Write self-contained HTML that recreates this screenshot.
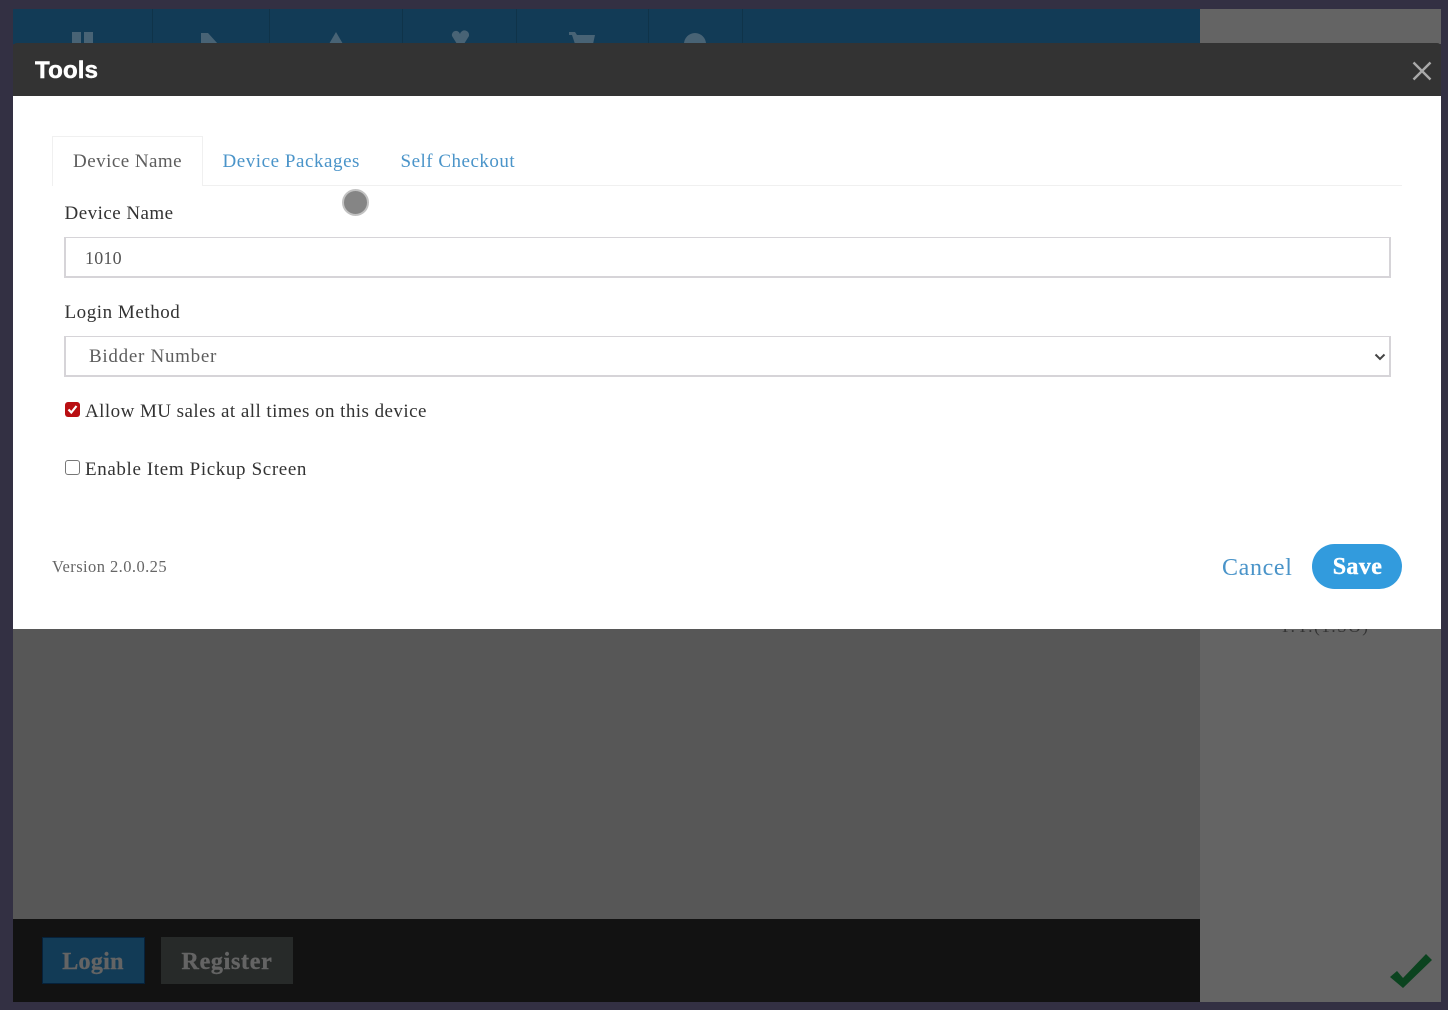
<!DOCTYPE html>
<html>
<head>
<meta charset="utf-8">
<title>Tools</title>
<style>
html,body{margin:0;padding:0}
body{width:1448px;height:1010px;overflow:hidden;position:relative;background:#333043;font-family:"Liberation Serif",serif}
div,span{position:absolute;white-space:nowrap}
.t{line-height:24px;font-size:19px;letter-spacing:.3px}
.b{font-weight:bold}
</style>
</head>
<body>
<div style="left:13px;top:9px;width:1187px;height:35px;background:#123b56"></div>
<div style="left:1200px;top:9px;width:241px;height:35px;background:#646464"></div>
<div style="left:13px;top:628px;width:1187px;height:291px;background:#575757"></div>
<div style="left:1200px;top:628px;width:241px;height:374px;background:#646464"></div>
<div style="left:13px;top:919px;width:1187px;height:83px;background:#121212"></div>

<!-- tab separators and icons behind the modal -->
<div style="left:152px;top:9px;width:1px;height:35px;background:#0f3349"></div>
<div style="left:269px;top:9px;width:1px;height:35px;background:#0f3349"></div>
<div style="left:402px;top:9px;width:1px;height:35px;background:#0f3349"></div>
<div style="left:516px;top:9px;width:1px;height:35px;background:#0f3349"></div>
<div style="left:648px;top:9px;width:1px;height:35px;background:#0f3349"></div>
<div style="left:742px;top:9px;width:1px;height:35px;background:#0f3349"></div>
<svg style="position:absolute;left:0;top:0" width="760" height="44">
<g fill="#486375">
<rect x="72" y="32" width="9" height="12"/><rect x="84" y="32" width="9" height="12"/>
<path d="M201 33h7l10 11h-17z"/>
<path d="M329 44l7-12 7 12z"/>
<path d="M452 36a4 4 0 0 1 8-2 4 4 0 0 1 9 2l-5 8h-7z"/>
<path d="M569 32h6l2 3h18l-2 9h-18l-3-9h-3z"/>
<path d="M684 44a11 11 0 0 1 22 0z"/>
</g>
</svg>

<div style="left:1279px;top:618px;font-size:17px;line-height:18px;color:#333;letter-spacing:1.6px">Y.Y.(1.SO)</div>

<!-- bottom buttons -->
<div style="left:42px;top:937px;width:103px;height:47px;background:#123b56;border:1px solid #06213a;box-sizing:border-box"></div>
<div class="b" style="left:42px;top:938px;width:102px;height:47px;line-height:48px;text-align:center;font-size:24px;color:#646464;letter-spacing:.3px;-webkit-text-stroke:.4px #646464">Login</div>
<div style="left:161px;top:937px;width:132px;height:47px;background:#272a29"></div>
<div class="b" style="left:161px;top:938px;width:132px;height:47px;line-height:48px;text-align:center;font-size:24px;color:#646464;letter-spacing:.7px;-webkit-text-stroke:.4px #646464">Register</div>

<!-- check -->
<svg style="position:absolute;left:1385px;top:950px" width="50" height="45">
<path d="M5 27L12 21 18 28 41 4 47 10 18 38Z" fill="#0b431f"/>
</svg>

<!-- modal -->
<div style="left:13px;top:96px;width:1428px;height:533px;background:#fff"></div>
<div style="left:13px;top:43px;width:1428px;height:53px;background:#333;border-radius:4px 4px 0 0"></div>
<div style="left:35px;top:56px;font-family:'Liberation Sans',sans-serif;font-weight:bold;font-size:24px;line-height:30px;color:#fff;letter-spacing:.2px;-webkit-text-stroke:.5px #fff">Tools</div>
<svg style="position:absolute;left:1410px;top:59px" width="24" height="24">
<path d="M3.500 3.500L20.500 20.500M20.500 3.500L3.500 20.500" stroke="#a9a9a9" stroke-width="2.400" fill="none"/>
</svg>

<!-- tabs -->
<div style="left:203px;top:185px;width:1199px;height:1px;background:#f0f0f0"></div>
<div style="left:52px;top:136px;width:151px;height:50px;box-sizing:border-box;border:1px solid #f0f0f0;border-bottom:0;background:#fff"></div>
<div class="t" style="left:73px;top:150px;color:#5d5d5d;letter-spacing:.47px">Device Name</div>
<div class="t" style="left:222.500px;top:150px;color:#4a94c9;letter-spacing:.55px">Device Packages</div>
<div class="t" style="left:400.500px;top:150px;color:#4a94c9;letter-spacing:.5px">Self Checkout</div>

<!-- cursor marker -->
<div style="left:342px;top:189px;width:27px;height:27px;box-sizing:border-box;border-radius:50%;background:#858585;border:2px solid #c2c2c2"></div>

<!-- Device name -->
<div class="t" style="left:64.500px;top:202px;color:#333;letter-spacing:.47px">Device Name</div>
<div style="left:64px;top:237px;width:1327px;height:41px;box-sizing:border-box;border:1px solid #d6d4d8;border-left-width:2px;border-bottom-width:2px;border-right-width:2px;background:#fff"></div>
<div class="t" style="left:85px;top:246px;color:#555;font-size:18px;letter-spacing:.2px">1010</div>

<!-- Login method -->
<div class="t" style="left:64.500px;top:301px;color:#333;letter-spacing:.55px">Login Method</div>
<div style="left:64px;top:336px;width:1327px;height:41px;box-sizing:border-box;border:1px solid #d6d4d8;border-left-width:2px;border-bottom-width:2px;border-right-width:2px;background:#fff"></div>
<div class="t" style="left:89px;top:345px;color:#5d5d5d;letter-spacing:.72px">Bidder Number</div>
<svg style="position:absolute;left:1373px;top:351px" width="14" height="12">
<path d="M2.500 3.500L7 8l4.500-4.500" fill="none" stroke="#444" stroke-width="2"/>
</svg>

<!-- checks -->
<div style="left:65px;top:402px;width:15px;height:15px;border-radius:3px;background:#b90f12"></div>
<svg style="position:absolute;left:65px;top:402px" width="15" height="15">
<path d="M3.500 7.500l2.800 3 5.200-6.500" fill="none" stroke="#fff" stroke-width="2.200"/>
</svg>
<div class="t" style="left:85px;top:400px;color:#333;letter-spacing:.45px">Allow MU sales at all times on this device</div>
<div style="left:65px;top:460px;width:15px;height:15px;box-sizing:border-box;border-radius:3px;border:1px solid #777;background:#fff"></div>
<div class="t" style="left:85px;top:458px;color:#333;letter-spacing:.63px">Enable Item Pickup Screen</div>

<!-- footer -->
<div style="left:52px;top:556px;font-size:16.500px;line-height:22px;color:#666;letter-spacing:.43px">Version 2.0.0.25</div>
<div style="left:1222px;top:553px;font-size:24px;line-height:30px;color:#4a94c9;letter-spacing:.65px">Cancel</div>
<div style="left:1312px;top:544px;width:90px;height:45px;border-radius:23px;background:#329bdd"></div>
<div class="b" style="left:1312px;top:544px;width:91px;height:47px;line-height:47px;text-align:center;font-size:24px;color:#fff;letter-spacing:.4px;-webkit-text-stroke:.4px #fff">Save</div>
</body>
</html>
